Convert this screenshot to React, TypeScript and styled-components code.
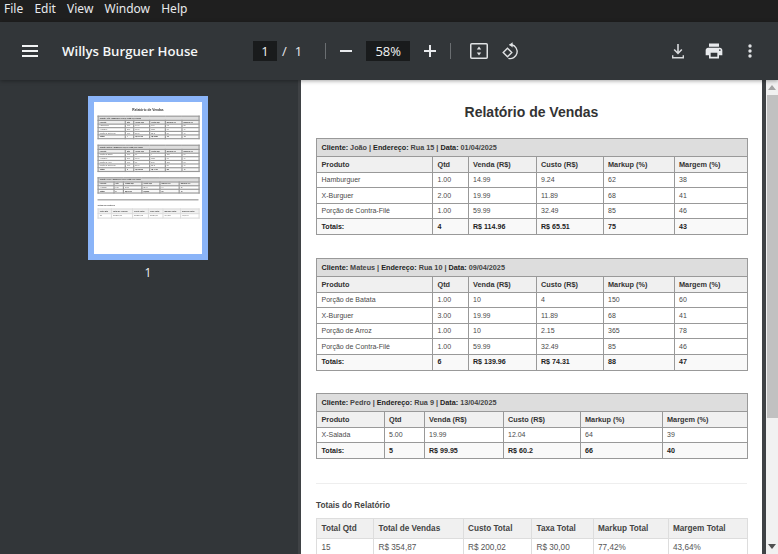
import React from "react";
import styled, { createGlobalStyle } from "styled-components";

const Global = createGlobalStyle`
  html, body { margin: 0; padding: 0; background: #323639; }
  * { box-sizing: border-box; }
`;

const Shell = styled.div`
  width: 778px;
  height: 554px;
  overflow: hidden;
  display: flex;
  flex-direction: column;
  font-family: "Liberation Sans", Arial, sans-serif;
`;

const MenuBar = styled.div`
  height: 22px;
  flex: none;
  background: #1f1f1f;
  display: flex;
  align-items: center;
  padding-left: 4px;
  gap: 11.2px;
  color: #e8eaed;
  font: 12px/18px "Noto Sans", sans-serif;
  padding-bottom: 5px;
`;

const Toolbar = styled.div`
  height: 58px;
  flex: none;
  background: #323639;
  display: flex;
  align-items: center;
  color: #f1f3f4;
  position: relative;
  z-index: 2;
  box-shadow: 0 1px 4px rgba(0, 0, 0, 0.35);
`;

const IconSlot = styled.div<{ $w: number; $ml: number }>`
  width: ${(p) => p.$w}px;
  margin-left: ${(p) => p.$ml}px;
  flex: none;
  display: flex;
  align-items: center;
  justify-content: center;
  svg { display: block; }
`;

const DocTitle = styled.div`
  width: 191px;
  margin-left: 24px;
  flex: none;
  font: 600 13.2px/20px "Open Sans", sans-serif;
  color: #f5f6f7;
`;

const FieldBox = styled.div<{ $w: number; $ml?: number }>`
  width: ${(p) => p.$w}px;
  margin-left: ${(p) => p.$ml ?? 0}px;
  height: 20px;
  flex: none;
  background: #191b1c;
  color: #f1f3f4;
  text-align: center;
  font: 13px/20px "Open Sans", sans-serif;
`;

const PageText = styled.span<{ $ml: number }>`
  margin-left: ${(p) => p.$ml}px;
  flex: none;
  font: 13px/20px "Open Sans", sans-serif;
  color: #e8eaed;
`;

const Separator = styled.div<{ $ml: number }>`
  width: 1px;
  height: 16px;
  flex: none;
  margin-left: ${(p) => p.$ml}px;
  background: #6a6e71;
`;

const Body = styled.div`
  flex: 1;
  min-height: 0;
  display: flex;
`;

const Sidebar = styled.aside`
  width: 298px;
  flex: none;
  background: #323639;
  padding: 16px 0 0 88px;
`;

const Thumb = styled.div`
  width: 120px;
  height: 164px;
  border: 6px solid #8ab4f8;
  background: #fff;
  overflow: hidden;
`;

const ThumbBlur = styled.div`
  width: 108px;
  height: 152px;
  overflow: hidden;
  filter: blur(0.35px);
`;

const ThumbScale = styled.div`
  width: 461px;
  height: 649px;
  padding: 0 15px;
  transform: scale(0.2343);
  transform-origin: 0 0;
  && table td, && table th { border-width: 5px; }
  && hr { border-top-width: 5px; border-color: #999; }
`;

const ThumbLabel = styled.div`
  width: 120px;
  margin-top: 5px;
  text-align: center;
  color: #f1f3f4;
  font: 12px/16px "Open Sans", sans-serif;
`;

const Viewer = styled.main`
  flex: 1;
  min-width: 0;
  display: flex;
  background: #3f4245;
  padding-left: 3px;
`;

const Sheet = styled.div`
  width: 461px;
  flex: none;
  height: 649px;
  background: #fff;
  padding: 0 15px;
`;

const Gutter = styled.div`
  width: 4px;
  flex: none;
`;

const Report = styled.div`
  font-family: "Liberation Sans", Arial, sans-serif;
  display: flex;
  flex-direction: column;
`;

const Heading = styled.h1`
  margin: 23px 0 0;
  height: 35px;
  text-align: center;
  font-size: 14px;
  line-height: 18px;
  font-weight: 700;
  color: #333;
`;

const DataTable = styled.table<{ $gap: number }>`
  width: 431px;
  table-layout: fixed;
  border-collapse: collapse;
  margin-bottom: ${(p) => p.$gap}px;
  font-size: 7px;
  color: #4a4a4a;
  td, th { border: 1px solid #999; padding: 0 0 0 4.5px; text-align: left; }
`;

const Column = styled.col<{ $w: number }>`
  width: ${(p) => p.$w}px;
`;

const TitleRow = styled.tr`
  height: 18px;
  background: #ddd;
  th { font-size: 7.25px; font-weight: 700; color: #444; }
  strong { font-weight: 700; color: #222; }
`;

const HeadRow = styled.tr<{ $h: number }>`
  height: ${(p) => p.$h}px;
  background: #f0f0f0;
  th { font-size: 7.3px; font-weight: 700; color: #333; }
`;

const ItemRow = styled.tr`
  height: 15.5px;
`;

const TotalRow = styled.tr`
  height: 16px;
  background: #f9f9f9;
  td { font-size: 7.1px; font-weight: 700; color: #222; }
`;

const Rule = styled.hr`
  width: 431px;
  margin: 0;
  border: 0;
  border-top: 1px solid #eee;
`;

const SectionLabel = styled.h3`
  margin: 17px 0 0;
  height: 17px;
  font-size: 8.25px;
  line-height: 10px;
  font-weight: 700;
  color: #444;
`;

const SummaryTable = styled.table`
  width: 431px;
  table-layout: fixed;
  border-collapse: collapse;
  font-size: 8.2px;
  color: #555;
  td, th { border: 1px solid #ddd; padding: 0 0 0 4.5px; text-align: left; }
  th { background: #f0f0f0; color: #444; font-weight: 700; height: 19.5px; }
  td { height: 19.5px; }
`;

const Scrollbar = styled.div`
  width: 12px;
  flex: none;
  background: #f1f1f1;
  display: flex;
  flex-direction: column;
  align-items: stretch;
`;

const ScrollButton = styled.div`
  height: 15px;
  flex: none;
  display: flex;
  align-items: center;
  justify-content: center;
`;

const ScrollThumb = styled.div`
  height: 323px;
  flex: none;
  margin-left: 1px;
  background: #c1c1c1;
`;

const ScrollTrack = styled.div`
  flex: 1;
`;

type Group = {
  client: string; addr: string; date: string; cols: number[]; headH: number;
  rows: string[][]; total: string[]; gap: number;
};

const wide = [116, 35.5, 68, 67, 71, 73.5];
const groups: Group[] = [
  {
    client: "João", addr: "Rua 15", date: "01/04/2025", cols: wide, headH: 15.5, gap: 23,
    rows: [
      ["Hamburguer", "1.00", "14.99", "9.24", "62", "38"],
      ["X-Burguer", "2.00", "19.99", "11.89", "68", "41"],
      ["Porção de Contra-Filé", "1.00", "59.99", "32.49", "85", "46"],
    ],
    total: ["Totais:", "4", "R$ 114.96", "R$ 65.51", "75", "43"],
  },
  {
    client: "Mateus", addr: "Rua 10", date: "09/04/2025", cols: wide, headH: 15.5, gap: 22,
    rows: [
      ["Porção de Batata", "1.00", "10", "4", "150", "60"],
      ["X-Burguer", "3.00", "19.99", "11.89", "68", "41"],
      ["Porção de Arroz", "1.00", "10", "2.15", "365", "78"],
      ["Porção de Contra-Filé", "1.00", "59.99", "32.49", "85", "46"],
    ],
    total: ["Totais:", "6", "R$ 139.96", "R$ 74.31", "88", "47"],
  },
  {
    client: "Pedro", addr: "Rua 9", date: "13/04/2025", cols: [67.5, 40, 79, 77, 82, 85.5], headH: 16, gap: 24,
    rows: [["X-Salada", "5.00", "19.99", "12.04", "64", "39"]],
    total: ["Totais:", "5", "R$ 99.95", "R$ 60.2", "66", "40"],
  },
];

const headers = ["Produto", "Qtd", "Venda (R$)", "Custo (R$)", "Markup (%)", "Margem (%)"];
const summaryCols = [57, 89.5, 68.5, 61.5, 75, 79.5];
const summaryHead = ["Total Qtd", "Total de Vendas", "Custo Total", "Taxa Total", "Markup Total", "Margem Total"];
const summaryRow = ["15", "R$ 354,87", "R$ 200,02", "R$ 30,00", "77,42%", "43,64%"];

function ReportBody() {
  return (
    <Report>
      <Heading>Relatório de Vendas</Heading>
      {groups.map((g) => (
        <DataTable key={g.client} $gap={g.gap}>
          <colgroup>
            {g.cols.map((w, i) => <Column key={i} $w={w} />)}
          </colgroup>
          <thead>
            <TitleRow>
              <th colSpan={6}>
                <strong>Cliente:</strong> {g.client} | <strong>Endereço:</strong> {g.addr} | <strong>Data:</strong> {g.date}
              </th>
            </TitleRow>
            <HeadRow $h={g.headH}>{headers.map((h) => <th key={h}>{h}</th>)}</HeadRow>
          </thead>
          <tbody>
            {g.rows.map((r, i) => (
              <ItemRow key={i}>{r.map((c, j) => <td key={j}>{c}</td>)}</ItemRow>
            ))}
            <TotalRow>{g.total.map((c, j) => <td key={j}>{c}</td>)}</TotalRow>
          </tbody>
        </DataTable>
      ))}
      <Rule />
      <SectionLabel>Totais do Relatório</SectionLabel>
      <SummaryTable>
        <colgroup>
          {summaryCols.map((w, i) => <Column key={i} $w={w} />)}
        </colgroup>
        <thead>
          <tr>{summaryHead.map((h) => <th key={h}>{h}</th>)}</tr>
        </thead>
        <tbody>
          <tr>{summaryRow.map((c) => <td key={c}>{c}</td>)}</tr>
        </tbody>
      </SummaryTable>
    </Report>
  );
}

const Menu = () => (
  <svg width="16" height="12" viewBox="0 0 16 12" fill="#f1f3f4">
    <rect y="0" width="16" height="2" /><rect y="5" width="16" height="2" /><rect y="10" width="16" height="2" />
  </svg>
);
const Minus = () => (
  <svg width="12" height="2" viewBox="0 0 12 2" fill="#e8eaed"><rect width="12" height="2" /></svg>
);
const Plus = () => (
  <svg width="12" height="12" viewBox="0 0 12 12" fill="#e8eaed">
    <rect y="5" width="12" height="2" /><rect x="5" width="2" height="12" />
  </svg>
);
const FitPage = () => (
  <svg width="18" height="16" viewBox="0 0 18 16">
    <rect x="0.75" y="0.75" width="16.5" height="14.5" rx="1" fill="none" stroke="#e0e2e4" strokeWidth="1.5" />
    <path d="M9 3.6 11.2 6.4H6.8zM9 12.4 6.8 9.6h4.4z" fill="#e0e2e4" />
  </svg>
);
const Rotate = () => (
  <svg width="19" height="19" viewBox="0 0 19 19" fill="none" stroke="#e0e2e4" strokeWidth="1.4">
    <path d="M1.2 10.5 5.5 6.2 9.8 10.5 5.5 14.8z" />
    <path d="M7.5 2.8h2.3a7 7 0 1 1-3.4 13.6" />
    <path d="M10.6 0.2 7.2 2.8l3.4 2.6z" fill="#e0e2e4" stroke="none" />
  </svg>
);
const Download = () => (
  <svg width="14" height="15" viewBox="0 0 14 15" fill="#d8dadc">
    <path d="M6.2 0h1.6v7.4l2.5-2.5 1.1 1.1L7 10.5 2.6 6l1.1-1.1 2.5 2.5z" />
    <path d="M1 11.2h1.4v1.8h9.2v-1.8H13V14.4H1z" />
  </svg>
);
const Print = () => (
  <svg width="20" height="20" viewBox="0 0 24 24" fill="#e8eaed">
    <path d="M19 8H5c-1.66 0-3 1.34-3 3v6h4v4h12v-4h4v-6c0-1.66-1.34-3-3-3zm-3 11H8v-5h8v5zm3-7c-.55 0-1-.45-1-1s.45-1 1-1 1 .45 1 1-.45 1-1 1zm-1-9H6v4h12V3z" />
  </svg>
);
const More = () => (
  <svg width="4" height="14" viewBox="0 0 4 14" fill="#e0e2e4">
    <circle cx="2" cy="2" r="1.7" /><circle cx="2" cy="7" r="1.7" /><circle cx="2" cy="12" r="1.7" />
  </svg>
);

export default function App() {
  return (
    <Shell>
      <Global />
      <MenuBar>
        <span>File</span><span>Edit</span><span>View</span><span>Window</span><span>Help</span>
      </MenuBar>
      <Toolbar>
        <IconSlot $w={16} $ml={22}><Menu /></IconSlot>
        <DocTitle>Willys Burguer House</DocTitle>
        <FieldBox $w={24}>1</FieldBox>
        <PageText $ml={5}>/</PageText>
        <PageText $ml={8}>1</PageText>
        <Separator $ml={23} />
        <IconSlot $w={12} $ml={14}><Minus /></IconSlot>
        <FieldBox $w={44} $ml={14}>58%</FieldBox>
        <IconSlot $w={12} $ml={14}><Plus /></IconSlot>
        <Separator $ml={14} />
        <IconSlot $w={18} $ml={19}><FitPage /></IconSlot>
        <IconSlot $w={19} $ml={14}><Rotate /></IconSlot>
        <IconSlot $w={14} $ml={150}><Download /></IconSlot>
        <IconSlot $w={20} $ml={19}><Print /></IconSlot>
        <IconSlot $w={4} $ml={24}><More /></IconSlot>
      </Toolbar>
      <Body>
        <Sidebar>
          <Thumb>
            <ThumbBlur>
              <ThumbScale><ReportBody /></ThumbScale>
            </ThumbBlur>
          </Thumb>
          <ThumbLabel>1</ThumbLabel>
        </Sidebar>
        <Viewer>
          <Sheet><ReportBody /></Sheet>
          <Gutter />
          <Scrollbar>
            <ScrollButton>
              <svg width="8" height="5" viewBox="0 0 8 5" fill="#a3a3a3"><path d="M4 0 8 5H0z" /></svg>
            </ScrollButton>
            <ScrollThumb />
            <ScrollTrack />
            <ScrollButton>
              <svg width="8" height="5" viewBox="0 0 8 5" fill="#505050"><path d="M0 0H8L4 5z" /></svg>
            </ScrollButton>
          </Scrollbar>
        </Viewer>
      </Body>
    </Shell>
  );
}
